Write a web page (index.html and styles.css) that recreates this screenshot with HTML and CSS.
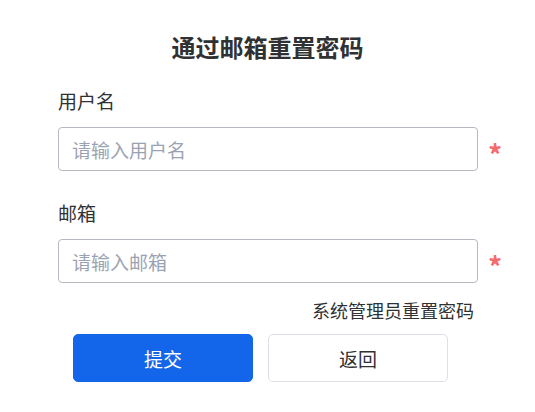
FILE: index.html
```html
<!DOCTYPE html>
<html lang="zh-CN">
<head>
<meta charset="utf-8">
<title>通过邮箱重置密码</title>
<link rel="stylesheet" href="styles.css">
</head>
<body>
<div class="page">
  <h1 class="title">通过邮箱重置密码</h1>
  <form class="form">
    <div class="field">
      <label class="label" for="username">用户名</label>
      <div class="control">
        <input class="input" id="username" type="text" placeholder="请输入用户名">
        <span class="required">*</span>
      </div>
    </div>
    <div class="field">
      <label class="label" for="email">邮箱</label>
      <div class="control">
        <input class="input" id="email" type="text" placeholder="请输入邮箱">
        <span class="required">*</span>
      </div>
    </div>
    <div class="links">
      <a class="admin-link" href="#">系统管理员重置密码</a>
    </div>
    <div class="actions">
      <button type="button" class="btn btn-primary">提交</button>
      <button type="button" class="btn btn-default">返回</button>
    </div>
  </form>
</div>
</body>
</html>
```

FILE: styles.css
```css
* { box-sizing: border-box; }
html, body {
  margin: 0;
  padding: 0;
  background: #ffffff;
}
body {
  font-family: "Noto Sans CJK SC", "Noto Sans", sans-serif;
  color: #303133;
}
.page {
  width: 535px;
  padding-top: 32px;
}
.title {
  margin: 0;
  text-align: center;
  font-size: 24px;
  line-height: 30px;
  font-weight: 700;
  color: #303133;
}
.form {
  margin: 0 0 0 58px;
  display: flex;
  flex-direction: column;
}
.field {
  display: flex;
  flex-direction: column;
  gap: 14px;
  margin-top: 27px;
}
.field + .field {
  margin-top: 30px;
}
.label {
  font-size: 19px;
  line-height: 24px;
  color: #303133;
}
.control {
  display: flex;
  align-items: center;
  gap: 10px;
}
.input {
  width: 420px;
  height: 44px;
  border: 1px solid #b6b9c2;
  border-radius: 4px;
  padding: 0 13px;
  font-family: inherit;
  font-size: 19px;
  color: #303133;
  outline: none;
  background: #fff;
}
.input::placeholder {
  color: #9ba3b3;
}
.required {
  color: #f56c6c;
  font-size: 28px;
  font-weight: 700;
  line-height: 1;
  padding-top: 10px;
}
.links {
  width: 420px;
  display: flex;
  justify-content: flex-end;
  margin-top: 15px;
  padding-right: 4px;
}
.admin-link {
  font-size: 18px;
  line-height: 24px;
  color: #303133;
  text-decoration: none;
}
.actions {
  display: flex;
  gap: 15px;
  margin-top: 12px;
  padding-left: 15px;
}
.btn {
  width: 180px;
  height: 48px;
  border-radius: 5px;
  font-family: inherit;
  font-size: 19px;
  cursor: pointer;
}
.btn-primary {
  background: #1366ea;
  border: 1px solid #1366ea;
  color: #fff;
}
.btn-default {
  background: #fff;
  border: 1px solid #dcdfe6;
  color: #303133;
}
```
